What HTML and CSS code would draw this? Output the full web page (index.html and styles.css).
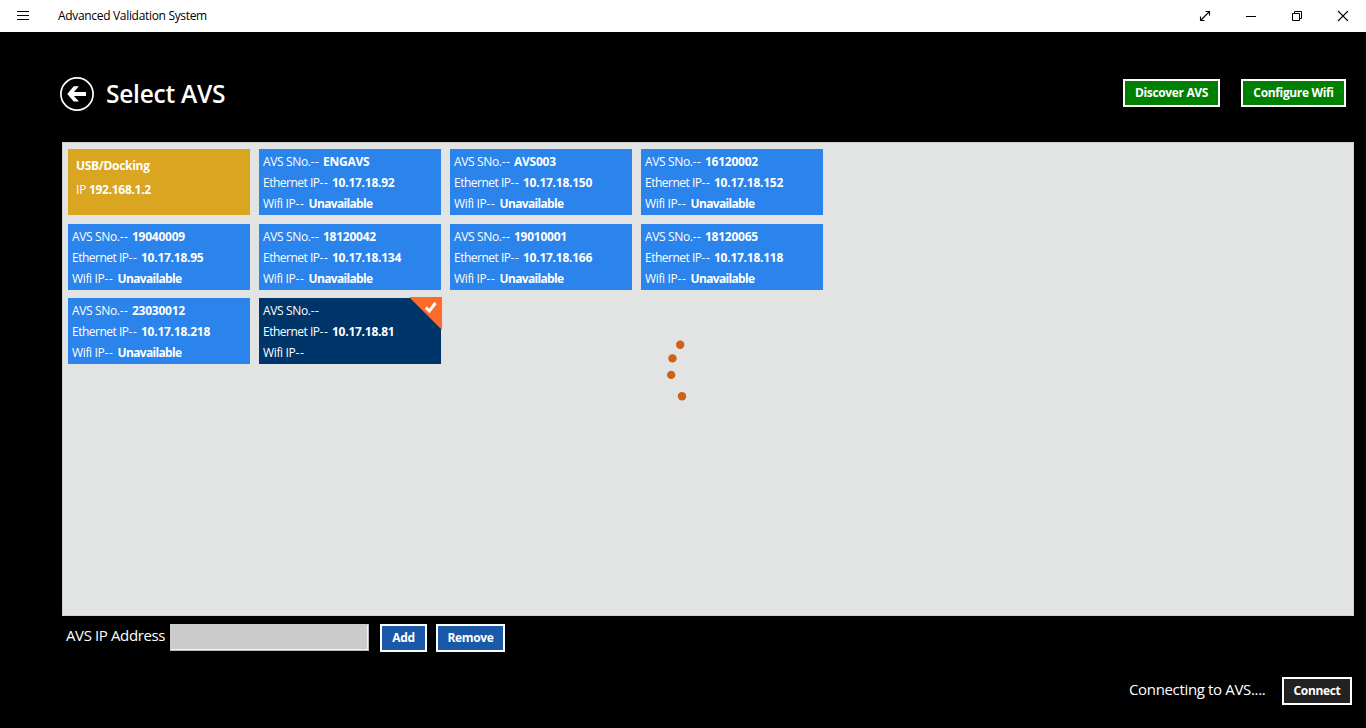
FILE: index.html
```html
<!DOCTYPE html>
<html lang="en">
<head>
<meta charset="utf-8">
<title>Advanced Validation System</title>
<link rel="stylesheet" href="styles.css">
</head>
<body>
<div class="app">
  <header class="titlebar">
    <svg class="menu" width="12" height="11" shape-rendering="crispEdges"><path d="M0 .5h12M0 4.5h12M0 8.5h12" stroke="#000"/></svg>
    <span class="app-name">Advanced Validation System</span>
    <div class="window-controls">
      <svg width="46" height="32" viewBox="0 0 46 32"><path d="M18.5 20.5l9-9M23.500 11.500h4v4M18.500 16.500v4h4" fill="none" stroke="#000" stroke-width="1.1"/></svg>
      <svg width="46" height="32" viewBox="0 0 46 32"><path d="M18 16.500h10" stroke="#000"/></svg>
      <svg width="46" height="32" viewBox="0 0 46 32"><path d="M18.500 13.500h7v7h-7zM20.500 13.500v-2h7v7h-2" fill="none" stroke="#000"/></svg>
      <svg width="46" height="32" viewBox="0 0 46 32"><path d="M18 11l10 10M28 11l-10 10" stroke="#000" stroke-width="1.1"/></svg>
    </div>
  </header>

  <div class="page-head">
    <svg class="back" width="34" height="34" viewBox="0 0 34 34"><circle cx="17" cy="17" r="16.100" fill="none" stroke="#fff" stroke-width="1.700"/><path d="M7.300 17L13.700 9.200h5.200l-5 5.900H26v3.800H13.900l5 5.600h-5.200z" fill="#fff"/></svg>
    <h1 class="page-title">Select AVS</h1>
    <div class="actions">
      <button class="btn green discover">Discover AVS</button>
      <button class="btn green configure">Configure Wifi</button>
    </div>
  </div>

  <main class="panel">
    <div class="tiles">
      <div class="tile docking"><p><b>USB/Docking</b></p><p><span>IP </span><b>192.168.1.2</b></p></div>
      <div class="tile"><p><span class="sno">AVS SNo.<i>--</i></span><b>ENGAVS</b></p><p><span class="eth">Ethernet IP<i>--</i></span><b>10.17.18.92</b></p><p><span class="wifi">Wifi IP<i>--</i></span><b class="state">Unavailable</b></p></div>
      <div class="tile"><p><span class="sno">AVS SNo.<i>--</i></span><b>AVS003</b></p><p><span class="eth">Ethernet IP<i>--</i></span><b>10.17.18.150</b></p><p><span class="wifi">Wifi IP<i>--</i></span><b class="state">Unavailable</b></p></div>
      <div class="tile"><p><span class="sno">AVS SNo.<i>--</i></span><b>16120002</b></p><p><span class="eth">Ethernet IP<i>--</i></span><b>10.17.18.152</b></p><p><span class="wifi">Wifi IP<i>--</i></span><b class="state">Unavailable</b></p></div>
      <div class="tile"><p><span class="sno">AVS SNo.<i>--</i></span><b>19040009</b></p><p><span class="eth">Ethernet IP<i>--</i></span><b>10.17.18.95</b></p><p><span class="wifi">Wifi IP<i>--</i></span><b class="state">Unavailable</b></p></div>
      <div class="tile"><p><span class="sno">AVS SNo.<i>--</i></span><b>18120042</b></p><p><span class="eth">Ethernet IP<i>--</i></span><b>10.17.18.134</b></p><p><span class="wifi">Wifi IP<i>--</i></span><b class="state">Unavailable</b></p></div>
      <div class="tile"><p><span class="sno">AVS SNo.<i>--</i></span><b>19010001</b></p><p><span class="eth">Ethernet IP<i>--</i></span><b>10.17.18.166</b></p><p><span class="wifi">Wifi IP<i>--</i></span><b class="state">Unavailable</b></p></div>
      <div class="tile"><p><span class="sno">AVS SNo.<i>--</i></span><b>18120065</b></p><p><span class="eth">Ethernet IP<i>--</i></span><b>10.17.18.118</b></p><p><span class="wifi">Wifi IP<i>--</i></span><b class="state">Unavailable</b></p></div>
      <div class="tile"><p><span class="sno">AVS SNo.<i>--</i></span><b>23030012</b></p><p><span class="eth">Ethernet IP<i>--</i></span><b>10.17.18.218</b></p><p><span class="wifi">Wifi IP<i>--</i></span><b class="state">Unavailable</b></p></div>
      <div class="tile selected"><p><span class="sno">AVS SNo.<i>--</i></span></p><p><span class="eth">Ethernet IP<i>--</i></span><b>10.17.18.81</b></p><p><span class="wifi">Wifi IP<i>--</i></span></p>
        <svg class="check" width="33" height="33" viewBox="0 0 33 33"><path d="M0 0h33v33z" fill="#ff6a2b"/><path d="M16.800 10.600l3.500 3.400 6.200-8" fill="none" stroke="#fff" stroke-width="2.900"/></svg>
      </div>
    </div>
    <svg class="spinner" width="22" height="66" viewBox="0 0 22 66"><g fill="#cf6114"><circle cx="15.200" cy="6.800" r="4.200"/><circle cx="7.500" cy="20.400" r="4.200"/><circle cx="6.200" cy="36.900" r="4.200"/><circle cx="17" cy="58.200" r="4.200"/></g></svg>
  </main>

  <div class="address-row">
    <label class="address-label" for="ip">AVS IP Address</label>
    <input class="address" id="ip" type="text">
    <button class="btn blue add">Add</button>
    <button class="btn blue remove">Remove</button>
  </div>
  <footer class="status-row">
    <span class="status">Connecting to AVS....</span>
    <button class="btn dark connect">Connect</button>
  </footer>
</div>
</body>
</html>
```
FILE: styles.css
```css
* { box-sizing: border-box; }
body { margin: 0; background: #000; font-family: "Open Sans", "Noto Sans", sans-serif; }
svg { display: block; flex: none; }
.app { display: flex; flex-direction: column; width: 1366px; height: 728px; overflow: hidden; color: #fff; }
.titlebar { display: flex; align-items: center; height: 32px; flex: none; padding-left: 17px; background: #fff; color: #000; }
.app-name { margin-left: 29px; font-size: 12px; letter-spacing: -.32px; line-height: 32px; white-space: nowrap; }
.window-controls { display: flex; margin-left: auto; }
.page-head { display: flex; align-items: center; height: 110px; flex: none; padding: 0 20px 0 60px; }
.back { margin-top: 14px; }
.page-title { margin: 14px 0 0 12px; font-size: 24.500px; font-weight: 600; line-height: 34px; letter-spacing: -.25px; white-space: nowrap; }
.actions { display: flex; gap: 21px; margin: 12px 0 0 auto; }
.btn { height: 28px; padding: 0; border: 2px solid #fff; color: #fff; font: 700 12px/24px "Open Sans", "Noto Sans", sans-serif; letter-spacing: -.35px; white-space: nowrap; }
.green { background: #008000; }
.blue { background: #1959a8; }
.dark { background: #222; }
.discover { width: 97px; }
.configure { width: 105px; }
.panel { position: relative; width: 1292px; height: 474px; flex: none; margin-left: 62px; padding: 6px 5px; border: 1px solid #cfd2d1; background: #e1e4e3; }
.tiles { display: grid; grid-template-columns: repeat(4, 182px); grid-template-rows: 75px 74px 75px; column-gap: 9px; align-items: start; }
.tile { position: relative; height: 66px; padding: 2px 4px; background: #2b83ec; font-size: 12px; line-height: 21px; white-space: nowrap; }
.tile p { display: flex; margin: 0; }
.tile b { letter-spacing: -.25px; }
.tile i { font-style: normal; letter-spacing: .6px; }
.tile .state { letter-spacing: -.66px; }
.sno { width: 60px; letter-spacing: -.35px; }
.eth { width: 69px; letter-spacing: -.5px; }
.wifi { width: 45.500px; letter-spacing: -.35px; }
.docking { padding: 5px 8px; background: #daa520; line-height: 24px; }
.docking span { width: 13px; }
.docking b { letter-spacing: -.3px; }
.selected { background: #003569; }
.check { position: absolute; top: -1px; right: -1px; }
.spinner { position: absolute; left: 602px; top: 195px; }
.address-row { display: flex; height: 54px; flex: none; padding: 8px 0 0 66px; }
.address-label { width: 104px; font-size: 15px; line-height: 22px; letter-spacing: -.38px; white-space: nowrap; }
.address { width: 199px; height: 27px; padding: 2px 6px; border: 1px solid #ccc; border-right-color: #bbb; border-bottom-color: #bbb; border-radius: 0; background: #ccc; box-shadow: inset -1px -1px #f2f2f2; }
.add { width: 47px; margin-left: 11px; }
.remove { width: 69px; margin-left: 9px; }
.status-row { display: flex; justify-content: flex-end; height: 58px; flex: none; padding: 7px 14px 0 0; }
.status { width: 153px; font-size: 15px; line-height: 25px; letter-spacing: -.34px; white-space: nowrap; }
.connect { width: 70px; }
```
